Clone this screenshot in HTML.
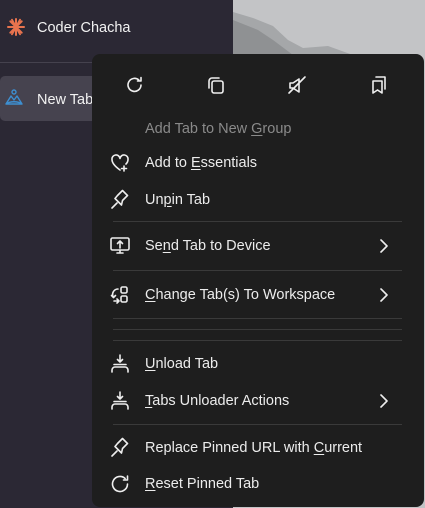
<!DOCTYPE html>
<html><head><style>
*{margin:0;padding:0;box-sizing:border-box}
body{width:425px;height:508px;overflow:hidden;background:#2a2733;font-family:"Liberation Sans",sans-serif;position:relative}
.side{position:absolute;left:0;top:0;width:233px;height:508px;background:#2b2834}
.img{position:absolute;left:233px;top:0;width:192px;height:508px;background:#c3c4c6}
.t{position:absolute;color:#f2f2f2;font-size:14.5px}
.menu{position:absolute;left:92px;top:54px;width:332px;height:453px;background:#1e1e1e;border-radius:8px}
.it{position:absolute;left:53px;font-size:14.5px;color:#ececec;white-space:nowrap;margin-top:1px}
.sep{position:absolute;left:21px;width:289px;height:1px;background:#3a3a3a}
.ic{position:absolute;left:17px;width:22px;height:22px}
.ar{position:absolute;left:286px;width:12px;height:18px}
svg{fill:none;stroke:#eee;stroke-width:1.6;stroke-linecap:round;stroke-linejoin:round}
u{text-decoration:underline;text-underline-offset:2px}
</style></head><body>
<div class="side"></div>
<div class="img">
<svg width="192" height="80" style="position:absolute;left:0;top:0;stroke:none"><path d="M0 12 L20 18 L40 26 L55 40 L70 48 L95 46 L120 55 L140 60 L150 60 L150 80 L0 80Z" fill="#a5a7a9"/><path d="M0 20 L25 30 L40 40 L60 55 L80 60 L0 80Z" fill="#8f9193"/></svg>
</div>
<svg width="20" height="20" style="position:absolute;left:6px;top:17px;stroke:#e8734e;stroke-width:2"><path d="M10 2v16M2 10h16M4.3 4.3l11.4 11.4M15.7 4.3L4.3 15.7M6 2.8l8 14.4M14 2.8l-8 14.4"/></svg>
<div class="t" style="left:37px;top:20px">Coder Chacha</div>
<div style="position:absolute;left:0;top:62px;width:233px;height:1px;background:#45424e"></div>
<div style="position:absolute;left:0;top:76px;width:100px;height:45px;background:#46434f;border-radius:5px"></div>
<svg width="20" height="20" style="position:absolute;left:4px;top:88px;stroke:#3d8fd1;stroke-width:1.4"><circle cx="10" cy="4" r="2"/><path d="M2 16L7 8l3 4 3-4 5 8zM2 16c4-3 12-3 16 0"/></svg>
<div class="t" style="left:37px;top:92px">New Tab</div>
<div class="menu">
<svg width="22" height="22" style="position:absolute;left:32px;top:20px"><path d="M17 11a6.5 6.5 0 1 1-2.2-5M17 3.5v3.5h-3.5"/></svg>
<svg width="22" height="22" style="position:absolute;left:113px;top:20px"><rect x="7" y="7" width="11" height="12" rx="2"/><path d="M4 14V7a3 3 0 0 1 3-3h7"/></svg>
<svg width="22" height="22" style="position:absolute;left:194px;top:20px"><path d="M4 9h3l6-4v13l-6-4H4zM3 19L19 3"/></svg>
<svg width="22" height="22" style="position:absolute;left:276px;top:20px"><path d="M5 7h9v12l-4.5-3L5 19zM8 3h9v12"/></svg>
<div class="it" style="top:66px;color:#8a8a8a">Add Tab to New <u>G</u>roup</div>
<svg class="ic" style="top:98px"><path d="M11 18C4 13 3 10 3 7.5a4 4 0 0 1 8-1 4 4 0 0 1 8 1c0 2-1 3.5-2 4.5M15 14v5M12.5 16.5h5"/></svg>
<div class="it" style="top:100px">Add to <u>E</u>ssentials</div>
<svg class="ic" style="top:135px"><path d="M3 19l5-5M6 9.5l6.5 6.5 1-4.5 5-5-5-5-5 5z"/></svg>
<div class="it" style="top:137px">Un<u>p</u>in Tab</div>
<div class="sep" style="top:167px"></div>
<svg class="ic" style="top:181px"><rect x="2" y="3" width="18" height="12" rx="1.5"/><path d="M11 13V6M8.5 8.5L11 6l2.5 2.5M11 15v3M8 18h6"/></svg>
<div class="it" style="top:183px">Se<u>n</u>d Tab to Device</div>
<svg class="ar" style="top:183px"><path d="M3 3l6 6-6 6"/></svg>
<div class="sep" style="top:216px"></div>
<svg class="ic" style="top:230px"><path d="M9 5a5.5 5.5 0 0 0-4.5 8.5M2.5 11.5l2 2 2-2"/><rect x="12" y="3" width="6" height="6" rx="1.5"/><rect x="12" y="12" width="6" height="6" rx="1.5"/><path d="M5 17h5M8 15l2 2-2 2"/></svg>
<div class="it" style="top:232px"><u>C</u>hange Tab(s) To Workspace</div>
<svg class="ar" style="top:232px"><path d="M3 3l6 6-6 6"/></svg>
<div class="sep" style="top:264px"></div>
<div class="sep" style="top:275px"></div>
<div class="sep" style="top:286px"></div>
<svg class="ic" style="top:299px"><path d="M11 2v7M8.5 6.5L11 9l2.5-2.5M5 11.5h12M3 19v-2a3 3 0 0 1 3-3h10a3 3 0 0 1 3 3v2"/></svg>
<div class="it" style="top:301px"><u>U</u>nload Tab</div>
<svg class="ic" style="top:336px"><path d="M11 2v7M8.5 6.5L11 9l2.5-2.5M5 11.5h12M3 19v-2a3 3 0 0 1 3-3h10a3 3 0 0 1 3 3v2"/></svg>
<div class="it" style="top:338px"><u>T</u>abs Unloader Actions</div>
<svg class="ar" style="top:338px"><path d="M3 3l6 6-6 6"/></svg>
<div class="sep" style="top:370px"></div>
<svg class="ic" style="top:383px"><path d="M3 19l5-5M6 9.5l6.5 6.5 1-4.5 5-5-5-5-5 5z"/></svg>
<div class="it" style="top:385px">Replace Pinned URL with <u>C</u>urrent</div>
<svg class="ic" style="top:419px"><path d="M18.5 11a7.5 7.5 0 1 1-2.4-5.5M18.5 3v4h-4"/></svg>
<div class="it" style="top:421px"><u>R</u>eset Pinned Tab</div>
</div>
</body></html>
